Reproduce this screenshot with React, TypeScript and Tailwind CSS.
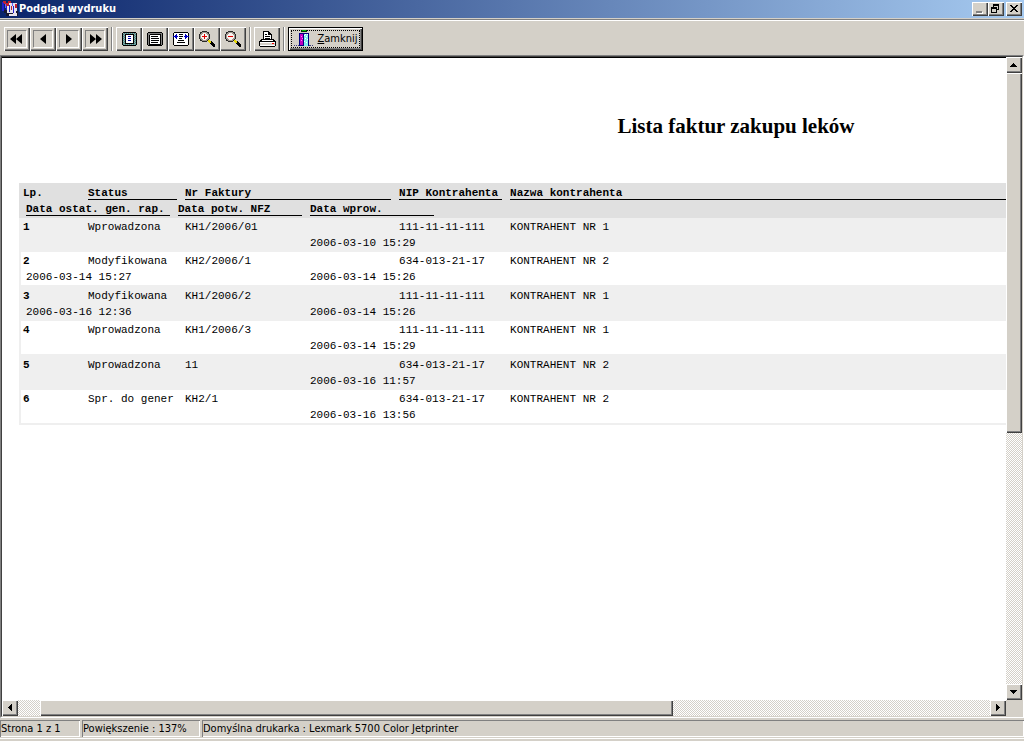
import type { ReactNode } from "react";

type Invoice = {
  status: string;
  number: string;
  nip: string;
  name: string;
  reportDate?: string;
  confirmDate?: string;
  entryDate: string;
};

const invoices: Invoice[] = [
  { status: "Wprowadzona", number: "KH1/2006/01", nip: "111-11-11-111", name: "KONTRAHENT NR 1", entryDate: "2006-03-10 15:29" },
  { status: "Modyfikowana", number: "KH2/2006/1", nip: "634-013-21-17", name: "KONTRAHENT NR 2", reportDate: "2006-03-14 15:27", entryDate: "2006-03-14 15:26" },
  { status: "Modyfikowana", number: "KH1/2006/2", nip: "111-11-11-111", name: "KONTRAHENT NR 1", reportDate: "2006-03-16 12:36", entryDate: "2006-03-14 15:26" },
  { status: "Wprowadzona", number: "KH1/2006/3", nip: "111-11-11-111", name: "KONTRAHENT NR 1", entryDate: "2006-03-14 15:29" },
  { status: "Wprowadzona", number: "11", nip: "634-013-21-17", name: "KONTRAHENT NR 2", entryDate: "2006-03-16 11:57" },
  { status: "Spr. do gener", number: "KH2/1", nip: "634-013-21-17", name: "KONTRAHENT NR 2", entryDate: "2006-03-16 13:56" },
];

const raised =
  "bg-[#d4d0c8] shadow-[inset_1px_1px_#fff,inset_-1px_-1px_#404040,inset_-2px_-2px_#808080]";
const track =
  "bg-[conic-gradient(#fff_25%,#d4d0c8_0_50%,#fff_0_75%,#d4d0c8_0)] bg-[length:2px_2px]";

const arrows = {
  left: "M9 4h1v7H9V10H8V9H7V8H6V7h1V6h1V5h1z",
  right: "M6 4h1v1h1v1h1v1h1v1H9v1H8v1H7v1H6z",
  up: "M7 6h1v1h1v1h1v1h1v1H4V9h1V8h1V7h1z",
  down: "M4 6h7v1h-1v1H9v1H8v1H7V9H6V8H5V7H4z",
};

const ScrollButton = ({ dir, label }: { dir: keyof typeof arrows; label: string }) => (
  <button type="button" aria-label={label} className={`size-4 shrink-0 ${raised}`}>
    <svg viewBox="0 0 16 16" className="size-4" shapeRendering="crispEdges">
      <path d={arrows[dir]} />
    </svg>
  </button>
);

const ToolButton = ({ label, children }: { label: string; children: ReactNode }) => (
  <button
    type="button"
    aria-label={label}
    className={`flex h-6 w-[26px] items-center justify-center ${raised}`}
  >
    {children}
  </button>
);

const NavButton = ({ label, d }: { label: string; d: string }) => (
  <ToolButton label={label}>
    <svg viewBox="0 0 20 18" className="h-[18px] w-5" shapeRendering="crispEdges">
      <path d="M0 0h19v1H1v16H0z" fill="#808080" />
      <path d="M19 1h1v17H1v-1h18z" fill="#fff" />
      <path d={d} shapeRendering="auto" />
    </svg>
  </ToolButton>
);

const Separator = () => <div className="mx-[3px] h-6 w-[2px] border-l border-[#808080] bg-white" />;

const PageIcon = () => (
  <svg viewBox="0 0 15 14" className="h-[14px] w-[15px]" shapeRendering="crispEdges">
    <defs>
      <pattern id="teal" width="2" height="2" patternUnits="userSpaceOnUse">
        <path d="M0 0h2v2H0z" fill="#309090" />
        <path d="M0 0h1v1H0zM1 1h1v1H1z" fill="#a09c98" />
      </pattern>
    </defs>
    <path d="M1 0h13v1h1v12h-1v1H1v-1H0V1h1z" />
    <path d="M1 1h13v12H1z" fill="url(#teal)" />
    <path d="M3 2h9v10H3z" />
    <path d="M4 3h7v8H4z" fill="#fff" />
    <path d="M6 4h3v1H6zM6 6h3v1H6zM6 8h3v1H6z" fill="#0000a0" />
  </svg>
);

const WidthIcon = () => (
  <svg viewBox="0 0 16 14" className="h-[14px] w-4" shapeRendering="crispEdges">
    <path d="M1 0h14v1h1v12h-1v1H1v-1H0V1h1z" />
    <path d="M1 1h14v12H1z" fill="#808080" />
    <path d="M3 2h11v11H2V3h1z" />
    <path d="M3 3h10v9H3z" fill="#fff" />
    <path d="M4 4h7v1H4zM4 6h8v1H4zM4 8h8v1H4zM4 10h7v1H4z" />
  </svg>
);

const FitIcon = () => (
  <svg viewBox="0 0 16 14" className="h-[14px] w-4" shapeRendering="crispEdges">
    <path d="M1 0h14v1h1v12h-1v1H1v-1H0V1h1z" />
    <path d="M1 1h14v12H1z" fill="#fff" />
    <path d="M6 2h4v1H6zM6 4h4v1H6zM6 6h3v1H6zM5 8h6v1H5zM4 10h8v1H4z" />
    <path d="M3 2h1v2h1v1H4v2H3V6H2V5H0V4h2V3h1zM12 2h1v1h1v1h2v1h-2v1h-1v1h-1V5h-1V4h1z" fill="#0000c0" />
  </svg>
);

const ZoomIcon = ({ plus = false }: { plus?: boolean }) => (
  <svg viewBox="0 0 16 16" className="size-4" shapeRendering="crispEdges">
    <path d="M3 0h5v1h2v2h1v5h-1v2H8v1H3v-1H1V8H0V3h1V1h2z" fill="#282828" />
    <path d="M3 1h5v1h1v1h1v5H9v1H8v1H3V9H2V8H1V3h1V2h1z" fill="#a09890" />
    <path d="M4 2h3v1h1v1h1v3H8v1H7v1H4V8H3V7H2V4h1V3h1z" fill="#f8f4f0" />
    <path d="M3 5h5v1H3z" fill="#e00000" />
    {plus && <path d="M5 3h1v5H5z" fill="#e00000" />}
    <path d="M9 9h2v1h1v2h-2v-1H9z" fill="#e8d800" />
    <path d="M12 10h1v1h1v1h1v1h1v3h-2v-1h-1v-1h-1v-1h-1v-1h1z" />
  </svg>
);

const PrinterIcon = () => (
  <svg viewBox="0 0 17 16" className="h-4 w-[17px]" shapeRendering="crispEdges">
    <path d="M4 0h6v1h1v1h1v1h1v5h2v1h1v1h1v5h-1v1H1v-1H0v-5h1V9h1V8h2z" />
    <path d="M5 1h4v3h3v4H5z" fill="#fff" />
    <path d="M6 3h2v1H6zM6 5h5v1H6zM6 7h5v1H6zM9 1h1v2H9z" />
    <path d="M3 9h11v1H3zM1 11h15v1H1z" fill="#fff" />
    <path d="M1 12h15v2H1z" fill="#d4d0c8" />
    <path d="M1 14h15v1H1z" fill="#fff" />
    <path d="M13 12h2v1h-2z" fill="#f00" />
  </svg>
);

const DoorIcon = () => (
  <svg viewBox="0 0 20 18" className="h-[18px] w-5" shapeRendering="crispEdges">
    <path d="M7 1h6v2H7z" fill="#003000" />
    <path d="M8 1h4v1H8z" fill="#00c000" />
    <path d="M5 4h10v13H5z" fill="#000080" />
    <path d="M6 5h3v11H6z" fill="#c000c0" />
    <path d="M7 7h1v1H7zM8 9h1v1H8zM7 11h1v1H7z" fill="#ff80ff" />
    <path d="M10 5h4v12h-4z" fill="#80f0f0" />
    <path d="M11 5h1v1h-1zM13 5h1v1h-1zM10 6h1v1h-1zM12 7h1v1h-1zM11 9h1v1h-1zM13 10h1v1h-1zM10 12h1v1h-1zM12 13h1v1h-1z" fill="#fff" />
    <path d="M0 16h1v1H0zM2 16h1v1H2zM4 16h1v1H4zM15 16h2v1h-2zM18 16h1v1h-1z" fill="#404080" />
  </svg>
);

const AppIcon = () => (
  <svg viewBox="0 0 16 16" className="size-4" shapeRendering="crispEdges">
    <path d="M4 2h11v13H4z" fill="#e8e4ec" />
    <path d="M0 1h2v9H0zM4 5h1v6H4zM7 4h1v7H7zM11 5h1v7h-1z" fill="#2020d0" />
    <path d="M1 0h3v2h2v3H4V3H2V2H1zM6 0h3v2H7v3H6zM9 5h1v4H9zM13 3h2v4h-2z" fill="#c02030" />
    <path d="M2 9h3v3h2v3H4v-3H2zM7 12h4v1H7zM14 10h2v5h-1v-3h-1z" fill="#181830" />
    <path d="M3 3h1v4H3zM10 2h1v3h-1z" fill="#6060ff" />
  </svg>
);

const CaptionButton = ({ label, children }: { label: string; children: ReactNode }) => (
  <button type="button" aria-label={label} className={`h-[14px] w-4 ${raised}`}>
    <svg viewBox="0 0 16 14" className="h-[14px] w-4" shapeRendering="crispEdges">
      {children}
    </svg>
  </button>
);

const TitleBar = () => (
  <header className="flex h-[18px] items-center bg-linear-to-r/srgb from-[#0a246a] to-[#a6caf0] px-[2px]">
    <AppIcon />
    <h1 className="ml-[1px] flex-1 text-[11px] leading-[18px] font-bold text-white">Podgląd wydruku</h1>
    <CaptionButton label="Minimalizuj">
      <path d="M5 10h6v2H5z" fill="#fff" />
      <path d="M4 9h6v2H4z" fill="#808080" />
    </CaptionButton>
    <CaptionButton label="Przywróć">
      <path d="M5 2h6v6H9V7h1V4H6v1H5zM3 5h6v6H3zM4 7v3h4V7z" fillRule="evenodd" />
    </CaptionButton>
    <div className="w-[2px]" />
    <CaptionButton label="Zamknij okno">
      <path d="M4 3h2v1h1v1h2V4h1V3h2v1h-1v1h-1v1H9v1h1v1h1v1h1v1h-2V9H9V8H7v1H6v1H4V9h1V8h1V7h1V6H6V5H5V4H4z" />
    </CaptionButton>
  </header>
);

const Toolbar = () => (
  <nav
    aria-label="Pasek narzędzi"
    className="mt-[1px] flex h-9 items-center border-t border-[#808080] px-1 pt-[2px] shadow-[inset_0_1px_#fff]"
  >
    <NavButton label="Pierwsza strona" d="M9 4v10L3 9zM15 4v10L9 9z" />
    <NavButton label="Poprzednia strona" d="M13 4v10L7 9z" />
    <NavButton label="Następna strona" d="M7 4v10l6-5z" />
    <NavButton label="Ostatnia strona" d="M5 4v10l6-5zM11 4v10l6-5z" />
    <Separator />
    <ToolButton label="Cała strona"><PageIcon /></ToolButton>
    <ToolButton label="Szerokość strony"><WidthIcon /></ToolButton>
    <ToolButton label="Dopasuj"><FitIcon /></ToolButton>
    <ToolButton label="Powiększ"><ZoomIcon plus /></ToolButton>
    <ToolButton label="Pomniejsz"><ZoomIcon /></ToolButton>
    <Separator />
    <ToolButton label="Drukuj"><PrinterIcon /></ToolButton>
    <Separator />
    <button type="button" className="h-6 w-[75px] border border-black bg-[#d4d0c8] p-[2px] shadow-[inset_1px_1px_#fff,inset_-1px_-1px_#404040,inset_-2px_-2px_#808080]">
      <span className="flex h-[18px] items-end justify-center gap-1 border border-dotted border-black leading-[16px]">
        <DoorIcon />
        <span><u>Z</u>amknij</span>
      </span>
    </button>
  </nav>
);

const Heading = ({ line, children }: { line: string; children: ReactNode }) => (
  <div className={`h-4 border-b border-black leading-[18px] ${line}`}>{children}</div>
);

const InvoiceTable = () => (
  <table className="w-full table-fixed border-collapse text-left font-['Liberation_Mono',monospace] text-[11px] leading-[16px] whitespace-nowrap">
    <colgroup>
      <col className="w-[69px]" />
      <col className="w-[90px]" />
      <col className="w-[7px]" />
      <col className="w-[125px]" />
      <col className="w-[89px]" />
      <col className="w-[111px]" />
      <col />
    </colgroup>
    <thead className="bg-[#e0e0e0]">
      <tr className="h-[17px] align-bottom">
        <th className="pl-[4px]"><div className="h-4 leading-[18px]">Lp.</div></th>
        <th colSpan={2}><Heading line="mr-2">Status</Heading></th>
        <th colSpan={2}><Heading line="mr-2">Nr Faktury</Heading></th>
        <th><Heading line="mr-2">NIP Kontrahenta</Heading></th>
        <th><Heading line="mr-0">Nazwa kontrahenta</Heading></th>
      </tr>
      <tr className="h-[18px] align-top">
        <th colSpan={2} className="pl-[7px]"><Heading line="mr-2">Data ostat. gen. rap.</Heading></th>
        <th colSpan={2}><Heading line="mr-2">Data potw. NFZ</Heading></th>
        <th colSpan={3}><Heading line="w-[124px]">Data wprow.</Heading></th>
      </tr>
    </thead>
    {invoices.map((inv, i) => {
      const framed = i % 2 === 1;
      return (
        <tbody key={i} className={framed ? "bg-white shadow-[inset_2px_-2px_#efefef]" : "bg-[#efefef]"}>
          <tr className="h-[17px] align-bottom">
            <th className="pl-[4px]">{i + 1}</th>
            <td colSpan={2}>{inv.status}</td>
            <td colSpan={2}>{inv.number}</td>
            <td>{inv.nip}</td>
            <td>{inv.name}</td>
          </tr>
          <tr className={framed ? "h-[18px] align-top" : "h-[17px] align-top"}>
            <td colSpan={2} className="pl-[7px]">{inv.reportDate}</td>
            <td colSpan={2}>{inv.confirmDate}</td>
            <td colSpan={3}>{inv.entryDate}</td>
          </tr>
        </tbody>
      );
    })}
  </table>
);

const StatusPanel = ({ width, children }: { width: string; children: ReactNode }) => (
  <div className={`h-[17px] px-[1px] pt-[1px] leading-[16px] shadow-[inset_1px_1px_#808080,inset_-1px_-1px_#fff] ${width}`}>
    {children}
  </div>
);

const App = () => (
  <div className="flex h-screen flex-col overflow-hidden bg-[#d4d0c8] font-['DejaVu_Sans_Condensed','DejaVu_Sans',sans-serif] text-[11px] text-black">
    <TitleBar />
    <Toolbar />
    <div className="flex min-h-0 flex-1 flex-col border-t border-r border-b border-l border-t-[#808080] border-r-white border-b-white border-l-[#808080]">
      <div className="flex min-h-0 flex-1 flex-col border border-t-[#404040] border-r-[#d4d0c8] border-b-[#d4d0c8] border-l-[#404040]">
        <div className="flex min-h-0 flex-1">
          <main className="min-w-0 flex-1 overflow-hidden border-t border-black bg-white">
            <div className="w-[1468px] pt-[54px] pl-[17px]">
              <h2 className="-ml-[17px] text-center font-['Liberation_Serif',serif] text-[21px] leading-[28px] font-bold">
                Lista faktur zakupu leków
              </h2>
              <div className="mt-[43px]">
                <InvoiceTable />
              </div>
            </div>
          </main>
          <div className={`flex w-4 flex-col ${track}`}>
            <ScrollButton dir="up" label="W górę" />
            <div className="min-h-0 flex-1">
              <div className={`h-[59%] ${raised}`} />
            </div>
            <ScrollButton dir="down" label="W dół" />
          </div>
        </div>
        <div className="flex h-4">
          <div className={`flex min-w-0 flex-1 ${track}`}>
            <ScrollButton dir="left" label="W lewo" />
            <div className="flex-1 pl-[22px]">
              <div className={`h-4 w-2/3 ${raised}`} />
            </div>
            <ScrollButton dir="right" label="W prawo" />
          </div>
          <div className="size-4 bg-[#d4d0c8]" />
        </div>
      </div>
    </div>
    <footer className="h-[23px] pt-[2px]">
      <div className="flex gap-[2px] border-b border-white pb-[1px]">
        <StatusPanel width="w-20">Strona 1 z 1</StatusPanel>
        <StatusPanel width="w-[118px]">Powiększenie : 137%</StatusPanel>
        <StatusPanel width="flex-1">Domyślna drukarka : Lexmark 5700 Color Jetprinter</StatusPanel>
      </div>
    </footer>
  </div>
);

export default App;
